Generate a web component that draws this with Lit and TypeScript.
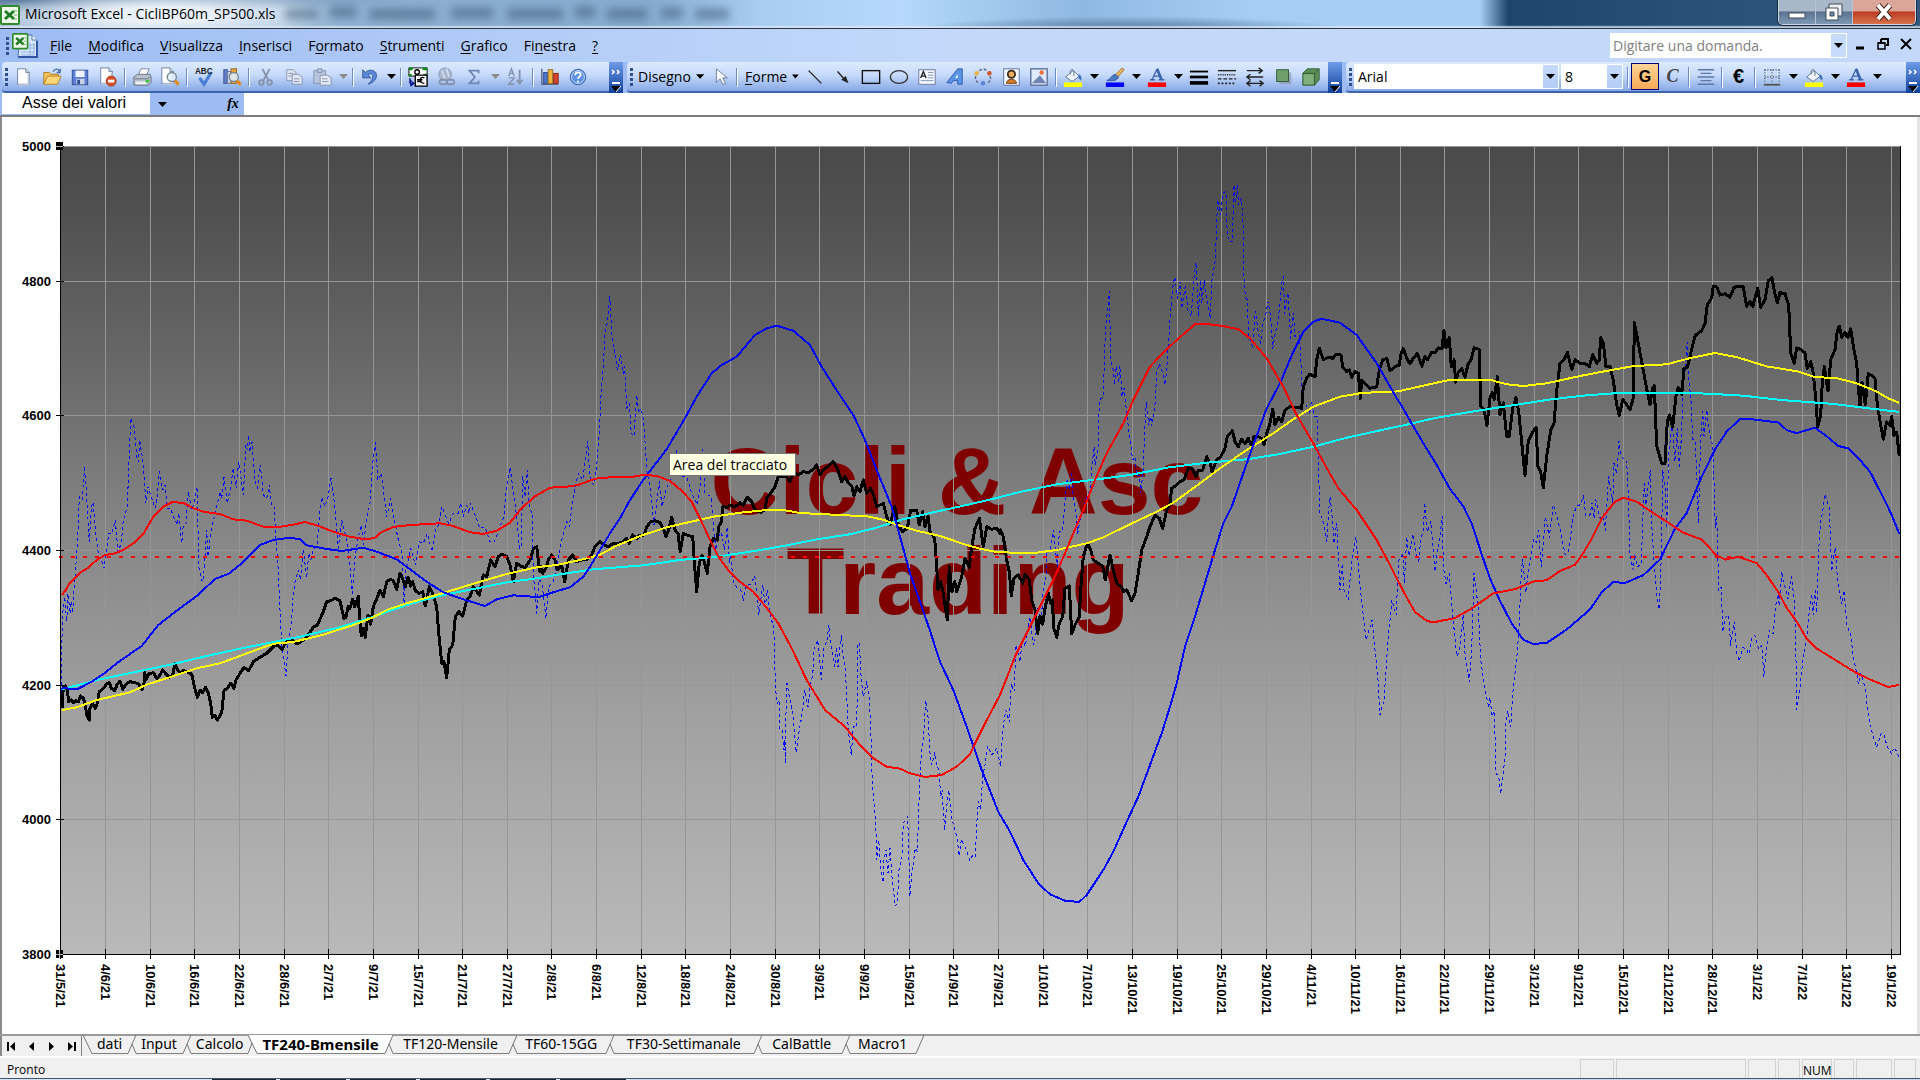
import { LitElement, html, svg, css, nothing, TemplateResult } from "lit";
import { customElement, property } from "lit/decorators.js";
import { classMap } from "lit/directives/class-map.js";

/* ---------- chart data ---------- */

/** A digitised run of points: an origin, the units per pixel, and "x,y" pairs. */
interface Run { x: number; y: number; sx: number; sy: number; p: string }

const run = (x: number, y: number, p: string, sx = 3, sy = sx): Run => ({ x, y, sx, sy, p });
const late = (p: string): Run => run(1400, 260, p, 3, 2.904);

const toPoints = (runs: Run[]): string =>
  runs
    .map((r) =>
      r.p.trim().split(/\s+/).map((pair) => {
        const [px, py] = pair.split(",").map(Number);
        return `${(r.x + px / r.sx).toFixed(1)},${(r.y + py / r.sy).toFixed(1)}`;
      }).join(" "))
    .join(" ");

const PRICE = toPoints([
  run(40, 380, `66,985 70,920 76,918 82,930 86,965 95,960 100,968 108,962 115,965 122,948 130,955 136,975 140,1005 148,1020 150,985 158,970 166,985 172,970 178,935 190,925 200,912 208,908 214,925 224,932 232,912 240,903 248,928 258,912 270,905 285,908 296,912 306,930 312,910 314,878 318,900 326,882 340,878 350,895 358,888 368,870 376,880 388,892 398,885 405,850 412,868 420,878 430,872 440,875 455,882 462,915 472,952 480,930 488,938 496,922 505,940 512,970 517,1012 525,1005 532,1020 545,998 552,932 562,925 572,910 582,925 588,900 600,880 612,862 626,872 640,845 660,832 680,820 700,800 712,795 726,808 740,785 755,780 772,792 790,780 805,765 820,742 832,735 848,700 860,665 872,662 885,655 900,662 906,690 912,715 918,712 924,680 930,685 938,658 944,680 955,648 958,700 964,768 970,745 976,772 984,705 992,732 1000,680 1012,652 1020,630 1030,650 1040,605 1052,598 1060,602 1070,628 1080,580 1090,602 1096,620 1104,592 1112,618 1118,605 1126,632 1138,640 1148,635 1156,678 1168,620 1178,640 1190,680 1196,760 1205,850 1212,845 1220,893 1228,810 1238,795 1246,710 1256,695 1268,708 1280,660 1290,650 1300,620 1318,645 1330,585 1340,590 1352,540 1365,560 1375,530 1385,523 1400,530 1410,555 1420,605 1430,550 1445,560 1456,562 1470,540 1480,508 1490,500 1496,550 1500,575`),
  run(500, 280, `122,860 128,880 138,865 145,840 155,825 165,840 172,870 185,855 194,905 205,840 218,825 230,845 245,840 262,838 275,825 285,800 300,785 312,795 325,800 340,790 355,790 370,785 380,775 388,790 398,765 410,775 420,765 432,765 440,740 452,725 465,722 480,728 490,745 498,770 506,750 515,712 525,750 534,760 541,815 550,760 560,765 578,770 584,860 590,935 598,850 606,825 614,850 622,880 630,800 640,775 652,780 656,740 664,725 668,680 680,682 690,676 705,680 720,668 730,675 742,652 755,665 765,690 782,697 795,690 800,655 812,640 825,620 835,590 860,590 870,605 880,575 895,585 910,575 925,578 940,568 950,555 960,585 970,570 985,558 1000,545 1012,565 1025,605 1035,590 1045,608 1056,620 1062,648 1070,620 1080,635 1090,600 1100,640 1112,625 1122,650 1130,680 1150,670 1160,710 1170,735 1184,680 1195,735 1208,755 1222,745 1232,690 1242,690 1250,690 1258,735 1268,695 1275,740 1284,708 1290,755 1304,775 1310,860 1314,930 1322,905 1330,940 1342,1020 1348,860 1356,935 1364,905 1370,935 1385,890 1395,835 1408,862 1415,800 1425,745 1438,715 1450,800 1460,740 1475,748 1490,745 1500,760`),
  run(740, 500, `782,90 790,110 800,180 808,215 814,288 822,235 835,225 848,250 855,222 868,240 875,300 885,330 893,400 900,350 908,372 916,320 925,280 932,310 938,300 940,380 950,412 958,370 968,350 975,265 988,258 995,402 1005,375 1018,350 1022,270 1030,170 1042,130 1052,150 1060,180 1075,190 1088,198 1096,240 1110,165 1120,210 1130,250 1145,262 1150,275 1160,270 1175,302 1185,280 1195,220 1205,150 1220,110 1230,80 1245,45 1258,55 1268,85 1280,30`),
  run(980, 170, `570,1000 575,955 590,945 600,935 612,930 625,895 636,895 648,920 655,900 668,900 680,860 690,878 696,905 710,870 722,860 735,835 742,800 757,782 765,815 775,830 785,808 795,822 805,805 815,830 822,800 835,800 845,805 852,825 860,790 870,760 878,718 885,765 895,742 905,755 915,720 930,710 945,712 965,715 970,650 980,625 990,612 1005,620 1010,570 1018,535 1030,570 1045,562 1058,565 1070,552 1083,555 1088,590 1100,605 1108,600 1115,622 1125,605 1135,610 1141,685 1145,630 1155,640 1170,655 1190,650 1198,600 1208,570 1220,565 1230,602 1245,590 1258,585`),
  late(`2,275 10,258 20,285 30,302 40,285 52,272 66,308 75,280 82,290 95,268 105,270 115,255 126,258 132,205 138,255 148,225 154,310 162,290 167,355 175,325 185,315 195,340 205,300 213,290 222,255 238,260 242,425 252,435 261,480 270,400 277,385 283,405 292,338 300,450 310,415 320,512 328,512 338,430 348,400 356,440 365,530 375,625 385,525 398,500 408,485 414,600 422,615 430,662 440,570 452,495 462,475 470,380 480,300 492,290 502,268 515,318 525,290 540,300 555,300 568,310 578,275 590,300 598,290 602,225 610,240 618,310 630,308 640,350 650,420 658,452 668,405 680,420 690,435 700,400 703,182 712,225 720,270 730,320 740,375 750,420 757,375 763,365 770,540 785,590 795,592 802,470 808,450 818,485 828,395 835,370 845,390 852,315 862,312 875,260 885,220 905,205 915,185 922,130 935,110 940,75 950,78 960,102 975,98 990,108 1002,80 1015,76 1030,78 1040,135 1050,120 1058,135 1073,82 1082,138 1095,115 1105,60 1116,52 1124,95 1132,125 1140,95 1155,98 1166,130 1172,270 1183,300 1190,255 1205,262 1215,270 1222,315 1232,295 1240,330 1247,400 1253,485 1262,450 1267,355 1273,310 1284,380 1292,290 1305,260 1312,205 1318,192 1325,225 1335,210 1343,225 1352,200 1360,250 1370,300 1375,370 1380,425 1386,355 1396,420 1405,330 1415,335 1425,345 1432,420 1442,480 1450,520 1460,470 1470,480 1475,455 1482,510 1490,500 1498,570`),
]);

const OSCILLATOR = toPoints([
  run(40, 380, `66,950 64,840 68,700 74,650 80,725 84,640 90,700 94,665 98,700 104,600 112,500 118,350 126,360 134,260 140,350 148,485 154,380 160,365 166,450 176,530 184,540 192,565 200,510 206,460 215,462 226,420 234,515 244,490 250,420 262,380 268,220 272,115 282,140 290,230 295,245 299,180 308,240 318,370 324,320 332,345 345,385 352,350 358,275 368,330 376,315 382,385 392,385 400,410 412,435 416,400 425,490 430,435 438,430 445,335 455,390 462,370 472,320 476,560 485,600 490,605 500,450 504,530 514,450 525,400 535,360 540,335 545,355 552,292 562,370 572,320 580,265 588,325 596,245 604,300 610,345 618,195 622,210 626,165 630,215 636,185 644,300 652,325 661,255 670,345 680,355 688,315 694,375 702,380 708,480 714,560 720,690 726,800 738,888 744,790 754,740 758,660 766,600 776,570 782,600 790,510 800,595 806,520 812,540 820,510 832,490 838,410 845,350 855,380 864,350 873,295 882,360 895,505 905,420 920,480 930,560 937,640 944,540 955,470 965,435 970,495 980,420 990,370 998,250 1006,188 1014,300 1024,280 1040,410 1052,355 1065,430 1075,480 1086,520 1092,670 1098,570 1112,505 1126,555 1138,485 1150,490 1162,460 1176,515 1186,450 1196,435 1206,380 1226,430 1240,400 1255,400 1262,370 1270,410 1280,375 1286,400 1292,370 1305,405 1320,445 1335,440 1350,485 1362,488 1380,440 1392,410 1398,340 1410,262 1418,320 1430,410 1438,505 1444,495 1448,290 1456,350 1462,270 1468,380 1476,400 1480,580 1490,700 1496,600`),
  run(500, 280, `120,900 126,910 138,1015 146,920 160,905 172,850 182,790 200,725 208,740 220,650 235,580 248,600 263,485 270,590 280,615 290,560 298,450 304,330 310,260 316,150 322,130 329,48 336,170 345,220 352,270 362,225 370,280 374,260 380,385 388,370 394,460 402,468 410,345 416,400 422,385 428,405 434,470 440,570 450,620 462,735 478,605 486,680 498,630 510,600 530,510 545,590 560,590 575,640 592,675 600,620 607,508 615,640 634,650 640,740 648,810 655,770 664,755 674,810 682,740 688,850 692,830 700,905 712,925 722,930 730,962 738,915 752,912 764,888 770,935 776,1005 782,960 788,915 796,980 802,930 810,1000 820,1040`),
  run(740, 500, `103,420 106,560 112,610 118,600 120,690 126,690 132,750 134,720 137,790 138,640 141,550 148,590 152,610 160,650 168,758 178,690 185,650 194,570 204,620 212,540 218,530 222,450 233,420 244,538 252,440 262,420 266,375 272,430 284,500 290,440 294,500 304,405 310,480 316,500 320,590 325,690 334,765 340,680 350,680 354,430 358,430 364,540 370,590 380,545 388,590 394,740 397,860 403,910 408,1000 410,1080 416,1020 422,1100 429,1148 432,1080 438,1050 444,1120 450,1045 456,1130 466,1218 472,1210 477,1110 486,1070 490,970 503,950 510,1190 516,1120 526,1045 532,1055 538,880 544,760 550,720 557,602 564,650 570,760 575,795 584,758 590,795 597,810 602,890 606,870 614,992 620,920 626,870 636,960 645,990 652,1020 658,1068 664,1018 675,1040 690,1082 698,1065 706,1070 712,940 716,905 722,930 728,830 736,790 743,738 756,765 770,745 782,800 788,690 797,630 808,665 814,550 822,575 828,435 840,485 848,410 856,440 862,400 870,350 880,435 886,400 892,320 903,370 910,270 918,230 920,150 930,155 940,90 952,200 958,95 968,95 975,0`),
  run(980, 170, `262,925 268,960 275,905 280,985 288,1030 293,1090 300,1050 318,990 330,960 335,900 342,830 346,885 354,840 358,690 370,680 376,490 388,365 392,570 400,600 404,645 408,590 416,640 420,588 426,680 432,655 440,730 450,810 458,870 465,860 470,915 478,915 482,968 490,900 494,780 499,695 506,765 512,740 515,768 524,720 530,610 538,580 548,610 556,645 562,570 566,510 572,420 580,340 585,320 592,385 600,335 605,415 616,350 624,420 634,440 642,320 648,278 652,350 655,440 662,330 665,400 673,330 682,400 690,445 696,330 706,270 710,150 714,90 722,135 728,70 738,65 742,200 750,215 757,215 762,45 766,100 772,45 776,105 784,85 790,170 792,320 796,380 802,390 806,500 818,530 826,425 834,480 842,525 848,460 856,440 864,395 872,440 878,535 888,480 895,450 905,340 910,320 914,430 924,370 932,505 940,430 945,500 958,485 964,600 968,700 975,700 990,730 994,695 1005,740 1012,740 1015,880 1020,1030 1028,1050 1040,1115 1046,1020 1051,980 1058,1060 1062,1120 1070,1060 1076,1180 1080,1260 1087,1180`),
  run(0, 0, `1344,590 1348,600 1352,560 1356,537 1361,595 1366,640 1372,620 1378,680 1380,715 1384,700 1388,640 1392,600 1396,615 1399,560`, 1),
  late(`2,870 8,850 13,940 20,805 27,860 40,795 48,850 56,880 62,810 70,790 74,705 82,790 92,760 105,905 112,850 120,800 127,745 130,890 138,940 148,910 156,1010 170,1150 178,1140 190,1030 196,1160 208,1225 215,1130 222,910 235,1010 242,1160 252,1230 260,1270 266,1300 270,1270 276,1325 283,1310 288,1490 296,1500 302,1550 308,1500 316,1440 318,1340 324,1310 332,1355 340,1240 350,1160 358,1060 364,900 368,870 378,965 385,900 392,860 402,810 410,820 416,785 424,890 436,745 448,805 460,710 472,750 482,790 495,855 505,850 512,800 520,740 530,715 542,710 550,685 558,745 570,740 576,705 582,750 587,695 600,750 608,745 616,785 622,690 626,630 638,705 642,590 650,620 657,525 664,570 680,585 685,680 690,860 700,900 704,855 712,890 724,885 728,760 733,650 738,710 751,610 756,780 762,880 770,970 778,1015 784,860 788,610 795,660 800,780 806,560 817,475 825,585 832,490 838,605 845,500 850,320 856,320 862,238 866,340 874,420 878,520 886,525 892,660 895,765 902,520 908,440 912,510 920,435 928,500 938,540 942,640 946,780 950,740 956,960 964,950 968,1080 975,1040 986,1030 992,1120 1002,1050 1010,1140 1018,1165 1028,1125 1040,1130 1046,1145 1055,1100 1064,1090 1076,1130 1085,1120 1092,1210 1100,1120 1108,1075 1120,1085 1126,1010 1134,970 1138,1005 1146,905 1155,950 1164,985 1174,920 1182,980 1187,1100 1190,1305 1200,1240 1210,1150 1222,1080 1228,1020 1235,970 1240,1030 1246,960 1250,1025 1256,840 1262,760 1270,720 1275,680 1288,720 1295,905 1305,835 1312,920 1326,1000 1332,960 1340,1060 1352,1090 1360,1150 1370,1200 1375,1230 1382,1200 1395,1240 1405,1320 1418,1380 1430,1415 1444,1375 1452,1375 1460,1410 1475,1435 1482,1415 1492,1430 1497,1450`),
]);

const RED_CYCLE = toPoints([
  run(40, 380, `66,645 76,632 90,608 105,595 120,578 145,563 170,540 195,525 225,520 250,510 280,490 310,462 340,410 370,380 395,367 430,368 460,385 490,395 540,402 580,418 620,422 670,440 710,442 760,434 795,426 830,436 880,455 930,470 970,477 1002,475 1025,456 1060,441 1110,435 1200,430 1240,438 1290,457 1330,462 1370,452 1410,428 1440,390 1470,362`),
  run(500, 280, `100,652 150,623 200,620 235,615 285,596 340,591 390,592 435,584 470,588 510,603 545,632 575,665 600,715 630,780 655,830 685,870`),
  run(740, 500, `0,245 40,275 85,330 115,370 155,445 200,540 255,630 315,680 360,735 400,775 440,800 480,806 510,820 555,831 605,825 650,800 690,762 730,680 780,585 825,470 870,380 905,310 940,240 975,160 1000,100 1030,30`),
  run(980, 170, `345,930 380,850 430,760 460,690 510,590 550,548 590,510 645,463 680,462 730,468 775,478 810,505 860,565 910,650 950,735 1000,820 1035,885 1075,955 1130,1020 1190,1110 1230,1185`),
  late(`0,943 20,980 45,1022 80,1048 100,1052 165,1040 215,1012 280,968 345,956 400,934 440,930 480,903 525,885 545,858 575,810 605,750 645,702 670,690 710,702 760,735 800,760 850,792 905,812 950,858 975,870 1015,862 1070,880 1100,915 1135,965 1160,1010 1190,1050 1220,1100 1245,1125 1300,1158 1370,1200 1410,1218 1465,1240 1498,1234`),
]);

const BLUE_CYCLE = toPoints([
  run(40, 380, `66,923 90,926 115,926 160,902 190,882 230,850 270,822 305,798 355,735 410,692 470,648 525,597 565,582 610,546 660,495 700,480 750,473 780,478 800,496 860,507 905,513 970,503 1010,515 1070,538 1110,568 1160,605 1210,637 1270,658 1335,678 1370,658 1420,646 1490,651`),
  run(500, 280, `120,950 150,940 210,922 250,890 270,860 300,810 330,760 360,715 390,660 430,600 460,560 500,508 540,440 560,405 590,350 635,280 665,255 710,230 765,165 800,145 830,137 880,152 930,195 965,260 1000,315 1060,405 1095,480 1130,570 1175,680 1200,770 1230,880 1265,980 1290,1052`),
  run(740, 500, `600,485 640,570 680,680 725,810 775,935 810,995 850,1080 895,1150 930,1183 975,1202 1018,1206 1040,1185 1090,1110 1120,1055 1160,965 1195,890 1230,795 1265,700 1290,620 1310,550 1335,440 1365,350 1395,250 1425,150 1450,70 1475,20`),
  run(980, 170, `790,910 820,825 860,715 900,640 940,545 970,485 1000,455 1025,446 1080,458 1130,495 1190,580 1250,685`),
  late(`0,415 35,475 75,540 110,595 150,665 190,715 215,765 245,855 270,925 300,990 335,1055 370,1103 400,1115 440,1112 500,1073 570,1015 605,965 640,935 675,938 730,915 780,870 825,780 860,735 900,640 945,550 980,498 1020,462 1060,463 1135,472 1160,494 1190,503 1245,487 1280,512 1315,540 1345,547 1375,575 1410,615 1450,690 1475,740 1498,795`),
]);

const FAST_AVERAGE = toPoints([
  run(40, 380, `66,990 110,982 170,960 270,937 320,914 400,888 470,865 540,850 600,828 680,798 710,790 760,786 850,764 940,735 1000,712 1040,690 1100,670 1200,642 1300,611 1400,582 1490,562`),
  run(500, 280, `120,860 170,855 250,838 300,824 350,797 420,768 500,742 560,728 640,710 720,698 800,690 850,690 900,699 1000,704 1100,709 1150,719 1200,737 1250,752 1320,768 1400,795 1440,806 1490,816`),
  run(740, 500, `780,157 830,158 890,158 950,150 1040,130 1090,112 1180,68 1250,35 1300,8`),
  run(980, 170, `660,940 720,895 800,840 880,790 940,748 1000,710 1080,680 1150,668 1240,666`),
  late(`0,380 60,367 140,350 200,348 270,348 320,361 370,366 440,358 540,337 620,322 700,308 800,303 870,285 945,270 1010,282 1100,309 1190,323 1245,340 1310,343 1370,358 1430,382 1465,402 1498,415`),
]);

const SLOW_AVERAGE = toPoints([
  run(40, 380, `66,928 180,898 300,873 400,852 500,828 600,806 720,782 780,770 900,742 1000,710 1100,675 1200,647 1300,627 1400,607 1490,595`),
  run(500, 280, `120,893 200,880 280,868 430,856 540,840 650,830 750,815 850,798 950,778 1050,763 1130,743 1200,720 1300,697 1400,675 1490,654`),
  run(980, 170, `110,968 230,943 330,931 450,915 560,893 680,878 800,868 900,852 1000,830 1100,803 1250,770`),
  late(`0,483 100,460 200,443 330,423 450,405 560,393 660,386 800,385 920,388 1030,394 1150,407 1300,418 1400,430 1498,441`),
]);

const DATES = `31/5/21 4/6/21 10/6/21 16/6/21 22/6/21 28/6/21 2/7/21 9/7/21 15/7/21 21/7/21 27/7/21 2/8/21 6/8/21 12/8/21 18/8/21 24/8/21 30/8/21 3/9/21 9/9/21 15/9/21 21/9/21 27/9/21 1/10/21 7/10/21 13/10/21 19/10/21 25/10/21 29/10/21 4/11/21 10/11/21 16/11/21 22/11/21 29/11/21 3/12/21 9/12/21 15/12/21 21/12/21 28/12/21 3/1/22 7/1/22 13/1/22 19/1/22`.split(" ");
const LEVELS = [5000, 4800, 4600, 4400, 4200, 4000, 3800];

const PLOT = { left: 60, right: 1900, top: 146, bottom: 954 };
const dateX = (i: number) => Math.round(60.3 + i * 44.65);
const levelY = (v: number) => Math.round(PLOT.top + ((5000 - v) / 1200) * (PLOT.bottom - PLOT.top));

/* ---------- icons, drawn on a 22 x 22 grid ---------- */

const page = (x = 4, y = 2) => svg`
  <path d="M${x} ${y}h9l4 4v13h-13z" fill="#fff" stroke="#6e7f9e"/>
  <path d="M${x + 9} ${y}v4h4" fill="#cfdcf2" stroke="#6e7f9e"/>
  <path d="M${x + 12} ${y + 5}v13h-11" fill="none" stroke="#b9c6de" stroke-width="2"/>`;
const lens = svg`<circle cx="13" cy="11" r="5" fill="#dff0fb" fill-opacity=".9" stroke="#7b8797" stroke-width="1.5"/><path d="M16.500 15l4 4.500" stroke="#e08a1c" stroke-width="3.500"/>`;
const bucket = svg`<path d="M3 11l8-7 7 6-8 6z" fill="#eef3fa" stroke="#5d6f8c"/><path d="M8 8c-1-6 4-8 4-1v3" fill="none" stroke="#5d6f8c"/><path d="M17 8c3 1 4 3 3 7l-3-3z" fill="#3f72b8"/>`;
const bigA = svg`<path d="M5.500 14L11 2.500" fill="none" stroke="#3c62a8" stroke-width="1.500"/><path d="M11 2l5 12" fill="none" stroke="#3c62a8" stroke-width="3"/><path d="M7.500 10h7M3.500 14h5M13 14h6" fill="none" stroke="#3c62a8" stroke-width="1.500"/>`;
const stripe = (c: string) => svg`<rect x="1" y="17" width="20" height="5" fill="${c}"/>`;

const ICONS: Record<string, TemplateResult> = {
  new: svg`${page()}`,
  open: svg`<path d="M2 19V6h6l2 2h8v4" fill="#f6c65a" stroke="#a8741a"/><path d="M2 19l4-9h15l-4 9z" fill="#fbd678" stroke="#b57d1e"/><path d="M12 5c3-4 6-3 7 0m1-3v4h-4" fill="none" stroke="#4b6ea8" stroke-width="1.500"/>`,
  save: svg`<rect x="2.500" y="3.500" width="17" height="16" fill="#5d80d4" stroke="#2f4c96"/><rect x="6" y="4" width="10" height="7" fill="#eef4ff"/><rect x="7" y="13" width="9" height="6" fill="#c8d2e4"/><rect x="8" y="14" width="3" height="5" fill="#2f4c96"/>`,
  perm: svg`${page(3, 1)}<circle cx="14.500" cy="15.500" r="5.500" fill="#d8512b" stroke="#a03818"/><rect x="11" y="14" width="7" height="3" fill="#fff"/>`,
  print: svg`<path d="M7 9l3-7h9l-3 7z" fill="#fff" stroke="#77859e"/><path d="M2 11l4-3h14l1 3v6l-3 3H2z" fill="#b9c1ce" stroke="#616d80"/><path d="M3 13h14l3-2" fill="none" stroke="#616d80"/><path d="M4 16h12v3H4z" fill="#eef1f5"/><rect x="15" y="14" width="4" height="3" fill="#3cc83c"/>`,
  preview: svg`${page(2, 1)}${lens}`,
  spell: svg`<path d="M6 12l5 7 8-13" fill="none" stroke="#4b7fd6" stroke-width="3.500"/><text x="1" y="8" class="tiny">ABC</text>`,
  research: svg`<rect x="2" y="3" width="4" height="15" fill="#5f7fc8" stroke="#39549a"/><rect x="6" y="5" width="4" height="13" fill="#c8d2e4" stroke="#68779a"/><rect x="10" y="2" width="6" height="16" fill="#e8a33a" stroke="#96641a"/>${lens}`,
  cut: svg`<path d="M7 2l7 13M15 2L8 15" stroke="#8492ae" stroke-width="2"/><circle cx="6" cy="17" r="2.500" fill="none" stroke="#8492ae" stroke-width="2"/><circle cx="15" cy="17" r="2.500" fill="none" stroke="#8492ae" stroke-width="2"/>`,
  copy: svg`<g fill="#dfe6f2" stroke="#8492ae"><path d="M3 3h7l3 3v9H3z"/><path d="M9 8h7l4 3v8H9z"/><path d="M5 7h5M5 10h4M11 13h6M11 16h6"/></g>`,
  paste: svg`<g fill="#b8c5dc" stroke="#8492ae"><path d="M2 4h13v14H2z"/><path d="M6 2h5v4H6z"/><path d="M9 9h8l4 3v8H9z" fill="#e4eaf4"/><path d="M11 13h6M11 16h7"/></g>`,
  undo: svg`<path d="M3 3v9h9l-3-3c3-3 6-1 5 2-.500 3-2 5-5 8 6-2 10-6 9-11C17 3 10 2 6 6z" fill="#5b88d6" stroke="#34589c"/>`,
  euro: svg`<path d="M1 1h20v9H1z" fill="#fff" stroke="#000"/><path d="M1 2h4M16 2h5M1 9h3M17 9h4" stroke="#118a11" stroke-width="3"/><circle cx="10" cy="5.500" r="2.500" fill="none" stroke="#000" stroke-width="1.500"/><path d="M8 9h13v12H8z" fill="#fff" stroke="#000" stroke-width="1.500"/><path d="M18 12c-5-3-7 6 0 6M10 14h6M10 16h5" fill="none" stroke="#000" stroke-width="1.500"/><path d="M2 12v6h3M3 15l4 3-4 3z" fill="#00108a" stroke="#00108a"/>`,
  link: svg`<circle cx="10" cy="8" r="7" fill="#a9b7d0" stroke="#8c9bb8"/><path d="M6 4c3 2 1 6 4 9M12 2c-1 4 3 5 2 9" fill="none" stroke="#d2dcec" stroke-width="2"/><rect x="4" y="14" width="8" height="5" rx="2.500" fill="none" stroke="#8492ae" stroke-width="2"/><rect x="12" y="14" width="8" height="5" rx="2.500" fill="none" stroke="#8492ae" stroke-width="2"/>`,
  sum: svg`<path d="M16 7V4H6l6 7-6 7h10v-3" fill="none" stroke="#6f84b4" stroke-width="2"/>`,
  sort: svg`<path d="M3 10l3-8 3 8M4 7h4M3 12h6l-6 7h6" fill="none" stroke="#8492ae" stroke-width="1.500"/><path d="M15 3v15M12 14l3 4 3-4" fill="none" stroke="#8492ae" stroke-width="2"/>`,
  chart: svg`<path d="M2 2v17h18" fill="none" stroke="#5a6684" stroke-width="1.500"/><rect x="4" y="6" width="4" height="12" fill="#4a78d0" stroke="#2b4a90"/><rect x="9" y="3" width="5" height="15" fill="#f0b43c" stroke="#9a6a14"/><rect x="15" y="7" width="5" height="11" fill="#d8442c" stroke="#8a2412"/>`,
  help: svg`<circle cx="11" cy="11" r="8.500" fill="#5b8fe0" stroke="#3560ac"/><circle cx="11" cy="11" r="7" fill="none" stroke="#d5e4fb"/><path d="M8 9c0-4 6-4 6-.500 0 2-3 2-3 4.500M11 15v2" fill="none" stroke="#fff" stroke-width="2"/>`,
  pointer: svg`<path d="M7 2v15l4-4 3 6 3-1-3-6h5z" fill="#f6f9ff" stroke="#6b7890"/>`,
  line: svg`<path d="M4 4l14 14" stroke="#222" stroke-width="1.500"/>`,
  arrow: svg`<path d="M5 5l8 9" stroke="#222" stroke-width="1.500"/><path d="M17 18l-8-4 5-4z" fill="#222"/>`,
  rect: svg`<rect x="1.500" y="4" width="19" height="14" fill="none" stroke="#111" stroke-width="1.500"/>`,
  oval: svg`<ellipse cx="11" cy="11" rx="9.500" ry="7" fill="none" stroke="#333" stroke-width="1.500"/>`,
  textbox: svg`<rect x="2" y="3" width="18" height="16" fill="#f4f8ff" stroke="#66779a"/><path d="M4 12l3-7 3 7M5 10h4" fill="none" stroke="#222" stroke-width="1.500"/><path d="M12 6h6M12 9h6M12 12h6M4 15h14" stroke="#7f8fb0"/>`,
  wordart: svg`<path d="M2 17L14 2h5v17h-5v-4H9l-2 3z" fill="#5a92e4" stroke="#2c5cae"/><path d="M11 12l3-4v4z" fill="#e8f1ff"/>`,
  diagram: svg`<g fill="none" stroke="#55627c" stroke-width="1.500" stroke-dasharray="3 2"><path d="M7 4c3-2 6-2 8 0M3 10c-1 4 1 7 4 8M19 10c1 4-1 7-4 8"/></g><circle cx="4" cy="7" r="2.500" fill="#e8b24a"/><circle cx="18" cy="7" r="2.500" fill="#d0562c"/><circle cx="11" cy="18" r="2.500" fill="#5e86d8"/>`,
  clip: svg`<rect x="3" y="2" width="17" height="18" fill="#f4f8ff" stroke="#5c6f96"/><circle cx="11.500" cy="8" r="4" fill="#f0b060" stroke="#3a2c1c" stroke-width="2"/><path d="M6 18c0-6 11-6 11 0z" fill="#d87a2a" stroke="#6a3c12"/>`,
  picture: svg`<rect x="2" y="2" width="18" height="18" fill="#dfeafc" stroke="#5c6f96" stroke-width="1.500"/><path d="M3 18l9-9 7 9z" fill="#6f86b4"/><circle cx="14" cy="6" r="2.500" fill="#e8763a"/>`,
  fill: svg`${bucket}${stripe("#ffff00")}`,
  brush: svg`<path d="M19 1l2 2-7 8-3-2z" fill="#f0b860" stroke="#9a6c20"/><path d="M11 8l4 3c-2 5-8 4-13 4 4-1 5-6 9-7z" fill="#4a7ac4" stroke="#2f5596"/>${stripe("#0000ff")}`,
  font: svg`${bigA}${stripe("#ff0000")}`,
  weight: svg`<path d="M1 5h20" stroke="#000" stroke-width="2"/><path d="M1 11h20" stroke="#000" stroke-width="3"/><path d="M1 17.500h20" stroke="#000" stroke-width="4"/>`,
  dash: svg`<g stroke="#222" stroke-width="1.500"><path d="M1 4h20"/><path d="M1 8.500h20" stroke-dasharray="1 1"/><path d="M1 13h20" stroke-dasharray="4 2"/><path d="M1 18h20" stroke-width="2" stroke-dasharray="2 2"/></g>`,
  arrows: svg`<g fill="none" stroke="#222" stroke-width="1.500"><path d="M2 4h17M15 1l4 3-4 3"/><path d="M2 11h18M6 8l-4 3 4 3"/><path d="M2 18h18M6 15l-4 3 4 3M16 15l4 3-4 3"/></g>`,
  shadow: svg`<rect x="7" y="6" width="13" height="13" fill="#8a98a8" opacity=".7"/><rect x="4" y="3" width="13" height="13" fill="#6fa06c" stroke="#2f5a34"/>`,
  cube: svg`<path d="M2 7l5-5h13v12l-5 6H2z" fill="#5b8f58" stroke="#2f5a34"/><path d="M2 7h13v13M15 7l5-5" fill="none" stroke="#2f5a34"/><path d="M3 8h11v11H3z" fill="#7fb07a"/>`,
  center: svg`<path d="M2 3h18M5 7h12M2 11h18M5 15h12M2 19h18" stroke="#5f76a8" stroke-width="1.500"/>`,
  border: svg`<path d="M3 3h16M3 11h16M3 3v15M11 3v15M19 3v15" stroke="#444" stroke-width="1.500" stroke-dasharray="1 2"/><path d="M2 19.500h18" stroke="#555" stroke-width="2"/>`,
};

/* ---------- toolbars ---------- */

type Tool = string | { icon: string; name: string };
const t = (icon: string, name: string): Tool => ({ icon, name });

const STANDARD: Tool[] = [
  t("new", "Nuovo"), t("open", "Apri"), t("save", "Salva"), t("perm", "Autorizzazione"), "|",
  t("print", "Stampa"), t("preview", "Anteprima di stampa"), "|",
  t("spell", "Controllo ortografia"), t("research", "Ricerche"), "|",
  t("cut", "Taglia"), t("copy", "Copia"), t("paste", "Incolla"), "v-", "|",
  t("undo", "Annulla"), "v", "|",
  t("euro", "Conversione in euro"), t("link", "Collegamento ipertestuale"), t("sum", "Somma automatica"), "v-", t("sort", "Ordinamento crescente"), "|",
  t("chart", "Creazione guidata Grafico"), t("help", "Guida"),
];
const SELECT_TOOLS: Tool[] = [t("pointer", "Seleziona oggetti"), "|"];
const DRAWING: Tool[] = [
  t("line", "Linea"), t("arrow", "Freccia"), t("rect", "Rettangolo"), t("oval", "Ovale"), t("textbox", "Casella di testo"),
  t("wordart", "WordArt"), t("diagram", "Diagramma"), t("clip", "ClipArt"), t("picture", "Immagine"), "|",
  t("fill", "Colore riempimento"), "v", t("brush", "Colore linea"), "v", t("font", "Colore carattere"), "v",
  t("weight", "Stile linea"), t("dash", "Stile tratteggio"), t("arrows", "Stile freccia"), t("shadow", "Ombreggiatura"), t("cube", "3D"),
];
const FORMAT_END: Tool[] = [
  t("border", "Bordi"), "v", t("fill", "Colore riempimento"), "v", t("font", "Colore carattere"), "v",
];

const MENUS: [string, string, string][] = [
  ["", "F", "ile"], ["", "M", "odifica"], ["", "V", "isualizza"], ["", "I", "nserisci"], ["F", "o", "rmato"],
  ["", "S", "trumenti"], ["", "G", "rafico"], ["Fi", "n", "estra"], ["", "?", ""],
];

const SHEETS = ["dati", "Input", "Calcolo", "TF240-Bmensile", "TF120-Mensile", "TF60-15GG", "TF30-Settimanale", "CalBattle", "Macro1"];
const ACTIVE = 3;

/* ---------- chart element ---------- */

@customElement("cycle-chart")
export class CycleChart extends LitElement {
  static styles = css`
    :host { display: block; min-height: 0; }
    svg { display: block; width: 100%; height: 100%; }
    .crisp { shape-rendering: crispEdges; }
    .grid { stroke: #969696; stroke-width: 1; }
    .axis { stroke: #000; stroke-width: 1; fill: none; }
    .tick { stroke: #000; stroke-width: 1; }
    .label { font: bold 13px "Liberation Sans", Arial, sans-serif; fill: #000; }
    .mark { font: bold 95px "Liberation Sans", Arial, sans-serif; fill: #800000; text-anchor: middle; }
    .series { fill: none; stroke-width: 2; stroke-linejoin: round; }
    .price { stroke: #000; stroke-width: 3; }
    .osc { stroke: #0000ff; stroke-width: 1; stroke-dasharray: 3 3; }
    .red { stroke: #ff0000; }
    .blue { stroke: #0000ff; }
    .yellow { stroke: #ffff00; }
    .cyan { stroke: #00ffff; }
    .zero { stroke: #ff0000; stroke-width: 2; stroke-dasharray: 4 8; }
    .tip { fill: #ffffe1; stroke: #767676; }
    .tiptext { font: 14px "Open Sans", "Noto Sans", sans-serif; fill: #000; }
  `;

  render() {
    return html`
      <svg viewBox="0 117 1920 917" role="img" aria-label="Cicli e prezzo S&P 500">
        <defs>
          <linearGradient id="wall" x1="0" y1="0" x2="0" y2="1">
            <stop offset="0" stop-color="#4a4a4a" /><stop offset=".08" stop-color="#505050" />
            <stop offset=".3" stop-color="#6c6c6c" /><stop offset=".5" stop-color="#898989" />
            <stop offset=".7" stop-color="#a0a0a0" /><stop offset="1" stop-color="#b9b9b9" />
          </linearGradient>
        </defs>
        <rect x=${PLOT.left} y=${PLOT.top} width=${PLOT.right - PLOT.left} height=${PLOT.bottom - PLOT.top} fill="url(#wall)" />
        <text class="mark" x="957" y="514">Cicli &amp; Asc</text>
        <text class="mark" x="958" y="614">Trading</text>
        <g class="crisp">
          ${DATES.map((_, i) => svg`<line class="grid" x1=${dateX(i)} x2=${dateX(i)} y1=${PLOT.top} y2=${PLOT.bottom} />`)}
          ${LEVELS.map((v) => svg`<line class="grid" x1=${PLOT.left} x2=${PLOT.right} y1=${levelY(v)} y2=${levelY(v)} />`)}
          <polyline class="series osc" points=${OSCILLATOR} />
          <polyline class="series price" points=${PRICE} />
          <polyline class="series cyan" points=${SLOW_AVERAGE} />
          <polyline class="series yellow" points=${FAST_AVERAGE} />
          <polyline class="series blue" points=${BLUE_CYCLE} />
          <line class="zero" x1="59" x2="1900" y1="557" y2="557" />
          <polyline class="series red" points=${RED_CYCLE} />
          <path class="axis" d="M60 146V954H1900V146" />
          ${DATES.map((_, i) => svg`<line class="tick" x1=${dateX(i)} x2=${dateX(i)} y1="949" y2="959" />`)}
          ${LEVELS.map((v) => svg`<line class="tick" x1="56" x2="64" y1=${levelY(v)} y2=${levelY(v)} />`)}
          <path d="M56 142h7v8h-7zM56 950h7v8h-7z" fill="#000" />
          <path d="M56 146h7M59 950v8M56 954h7" stroke="#bbb" />
        </g>
        ${LEVELS.map((v) => svg`<text class="label" text-anchor="end" x="51" y=${levelY(v) + 5}>${v}</text>`)}
        ${DATES.map((d, i) => svg`<text class="label" transform="translate(${dateX(i) - 4} 964) rotate(90)">${d}</text>`)}
        <rect class="tip crisp" x="669" y="453" width="126" height="22" />
        <text class="tiptext" x="673" y="470">Area del tracciato</text>
      </svg>
    `;
  }
}

/* ---------- toolbar element ---------- */

@customElement("tool-strip")
export class ToolStrip extends LitElement {
  @property({ attribute: false }) tools: Tool[] = [];

  static styles = css`
    :host { display: flex; align-items: center; }
    button { padding: 0; border: 0; background: none; display: flex; align-items: center; justify-content: center; height: 28px; }
    .tool { width: 28px; }
    .tool svg { width: 20px; height: 20px; }
    .drop { width: 14px; }
    .drop svg { width: 9px; height: 5px; }
    .sep { width: 1px; height: 18px; margin: 0 3px 0 2px; background: #6a8ccb; box-shadow: 1px 1px 0 #fff; }
    .tiny { font: bold 9px "Liberation Sans", sans-serif; fill: #222; }
  `;

  render() {
    return this.tools.map((tool) => {
      if (tool === "|") return html`<span class="sep"></span>`;
      if (typeof tool === "string") {
        return html`<button class="drop" aria-label="Altre opzioni">
          <svg viewBox="0 0 9 5"><path d="M0 0h9L4.500 5z" fill=${tool === "v" ? "#000" : "#8c8c8c"} /></svg>
        </button>`;
      }
      return html`<button class="tool" aria-label=${tool.name}>
        <svg viewBox="0 0 22 22">${ICONS[tool.icon]}</svg>
      </button>`;
    });
  }
}

/* ---------- application ---------- */

@customElement("app-root")
export class AppRoot extends LitElement {
  static styles = css`
    :host {
      display: flex; flex-direction: column; height: 100vh; overflow: hidden; background: #fff; color: #000;
      font: 14px/20px "Open Sans", "Noto Sans", sans-serif;
    }
    * { box-sizing: border-box; }
    button { padding: 0; margin: 0; border: 0; background: none; font: inherit; color: inherit; }

    .title {
      height: 29px; flex: none; display: flex; align-items: flex-start; padding-right: 4px;
      border-bottom: 1px solid #2c3440; position: relative; overflow: hidden;
      background:
        linear-gradient(180deg, transparent 90%, #dce8f4cc 96%),
        radial-gradient(ellipse 170px 26px at 160px 15px, #e9f0f8 30%, transparent 100%),
        radial-gradient(ellipse 220px 14px at 1130px 30px, #4f7096 0, transparent 100%),
        radial-gradient(ellipse 420px 12px at 0 0, #5b7b9f 0, transparent 100%),
        linear-gradient(90deg, #a9bfd8 0, #b3cbe4 280px, #8fb1d2 340px, #86abcf 650px, #a9cdf2 760px, #b5d8fc 900px, #8fb8e0 1080px, #a6cdf4 1250px, #a8cdf5 1480px, #1f456c 1508px, #2a5078 1700px, #31577e 100%);
    }
    .haze { position: absolute; left: 285px; top: 4px; width: 460px; height: 20px; filter: blur(4px); opacity: .5; }
    .appicon { width: 20px; height: 20px; margin: 5px 5px 0 0; }
    .caption { flex: 1; margin-top: 4px; position: relative; }
    .winbtns { display: flex; position: relative; height: 25px; border: 1px solid #c9d6e4; border-top: 0; border-radius: 0 0 5px 5px; overflow: hidden; box-shadow: 0 0 0 1px #1b2c40; }
    .winbtns button { width: 37px; display: flex; justify-content: center; align-items: center; border-right: 1px solid #b4c4d6; background: linear-gradient(#a9b8c9 0 45%, #5b7390 50%, #7e98b4); }
    .winbtns .close { width: 62px; border: 0; background: linear-gradient(#dba597 0 45%, #bd3d25 50%, #d8734a); }
    .winbtns svg { width: 22px; height: 20px; }

    .menubar { height: 33px; flex: none; display: flex; align-items: center; padding: 0 4px 0 6px; background: linear-gradient(90deg, #9dbcf4, #c4d9fa 50%); }
    .grip { width: 3px; height: 18px; background: repeating-linear-gradient(#2f4f8f 0 3px, transparent 3px 5px); }
    .menubar .book { width: 26px; height: 26px; margin: 0 12px 0 3px; }
    .menus { display: flex; gap: 16px; flex: 1; }
    .menus button { height: 24px; line-height: 24px; }
    u { text-underline-offset: 2px; }
    .ask { display: flex; width: 237px; height: 25px; background: #fff; border: 1px solid #fff; }
    .ask input { flex: 1; min-width: 0; border: 0; padding: 0 2px; font: inherit; background: none; outline: 0; }
    .ask input::placeholder { color: #808080; opacity: 1; }
    .ask button { width: 15px; background: #c6dafa; display: flex; align-items: center; justify-content: center; }
    .mdi { width: 20px; height: 20px; margin-left: 3px; }
    .mdi svg { width: 14px; height: 14px; }

    .bars { height: 31px; flex: none; display: flex; gap: 4px; padding-left: 2px; background: #9dbcf4; }
    .bar { display: flex; align-items: center; border-radius: 4px 0 0 4px; background: linear-gradient(#dceafd, #c6dafa 45%, #86a9e6); border-bottom: 2px solid #3c65ae; }
    .bar .grip { margin: 0 2px 0 3px; }
    .grow { flex: 1; min-width: 0; }
    .end { width: 14px; align-self: stretch; margin: 0 0 -2px auto; background: linear-gradient(#6f9be8, #10409c); display: flex; align-items: flex-end; justify-content: center; }
    .end svg { width: 12px; height: 28px; }
    .standard { width: 621px; }
    .drawing { width: 715px; }
    .word { display: flex; align-items: center; gap: 5px; height: 28px; padding: 0 2px 0 3px; white-space: nowrap; }
    .word svg, .caret { width: 9px; height: 5px; }
    .word.first { width: 71px; }
    .word.forms { width: 61px; padding-left: 5px; }
    .combo { position: relative; display: flex; height: 25px; margin-right: 2px; background: #fff; }
    .combo select { appearance: none; flex: 1; width: 100%; border: 1px solid #fff; padding: 0 3px; font: inherit; background: linear-gradient(#c6dafa, #b4cdf6) right / 15px 100% no-repeat #fff; border-radius: 0; color: #000; }
    .combo .caret { position: absolute; right: 4px; top: 10px; pointer-events: none; }
    .family { width: 205px; }
    .size { width: 62px; }
    .sep { width: 1px; height: 20px; margin: 0 3px 0 2px; background: #6a8ccb; box-shadow: 1px 1px 0 #fff; }
    .face { width: 27px; height: 27px; font: bold 16px "Liberation Sans", Arial, sans-serif; }
    .face.on { width: 28px; background: linear-gradient(#fdd598, #f8ab55); border: 1px solid #00007a; }
    .face.it { font-family: "Liberation Serif", serif; font-style: italic; font-size: 18px; color: #444; }
    .face.euro { font-size: 20px; }
    .face svg { width: 20px; height: 20px; display: block; margin: auto; }

    .formula { height: 24px; flex: none; display: flex; padding-left: 2px; background: #9dbcf4; border-bottom: 2px solid #7c7c7c; }
    .formula .name { width: 148px; height: 21px; border: 0; padding: 0 0 2px 20px; font: 16px/20px "Liberation Sans", Arial, sans-serif; }
    .formula .namedrop { width: 24px; display: flex; align-items: center; justify-content: center; }
    .formula .fx { width: 42px; margin-left: 28px; padding-left: 20px; text-align: center; font: italic bold 14px/22px "Liberation Serif", serif; }
    .formula .cell { flex: 1; border: 0; padding: 0 4px; min-width: 0; font: inherit; outline: 0; }

    .window { flex: 1; min-height: 0; display: flex; flex-direction: column; }
    cycle-chart { flex: 1; box-shadow: inset 2px 0 0 #8a8a8a, inset -3px 0 0 #e4e4e4; }

    .tabs { flex: none; height: 22px; display: flex; align-items: stretch; background: #f0f0f0; border-top: 2px solid #9a9a9a; }
    .nav { display: flex; width: 82px; border-right: 1px solid #808080; border-left: 2px solid #8a8a8a; }
    .nav button { flex: 1; display: flex; align-items: center; justify-content: center; }
    .nav svg { width: 9px; height: 9px; }
    .tab { display: grid; padding: 0 4px; border-bottom: 1px solid #808080; line-height: 18px; font-family: "Noto Sans", sans-serif; text-align: center; height: 19px; margin-top: -1px; white-space: nowrap; }
    .tab span, .tab::after { grid-area: 1 / 1; }
    .tab.wide::after { content: attr(data-name); font-size: 15px; font-weight: 700; visibility: hidden; }
    .tab.on { background: #fff; font-weight: 700; font-size: 15px; }
    .edge { width: 11px; height: 19px; flex: none; margin-top: -1px; }

    .status { flex: none; height: 22px; display: flex; background: #f0f0f0; border-top: 2px solid #fff; padding: 1px 4px 0 7px; font-size: 12px; line-height: 22px; }
    .status .msg { flex: 1; }
    .cells { display: flex; gap: 2px; }
    .cells span { border: 1px solid #d2d2d2; border-bottom: 0; text-align: center; }
    .w20 { width: 20px; } .w22 { width: 22px; } .w28 { width: 28px; } .w30 { width: 30px; } .w34 { width: 34px; } .w36 { width: 36px; } .w130 { width: 130px; }
    .task { flex: none; height: 2px; border-top: 1px solid #40566e; background: linear-gradient(90deg, #d5e4f5 212px, transparent 212px 630px, #c6d9ee 630px), repeating-linear-gradient(90deg, #20242c 0 66px, #dfe8f2 66px 70px); }
  `;

  private caret() {
    return html`<svg class="caret" viewBox="0 0 9 5"><path d="M0 0h9L4.500 5z" fill="#000" /></svg>`;
  }

  private end(more: boolean) {
    return html`<button class="end" aria-label="Opzioni barra degli strumenti">
      <svg viewBox="0 0 12 28">
        ${more ? svg`<path d="M2 5l2 2-2 2M7 5l2 2-2 2" fill="none" stroke="#fff" stroke-width="1.500"/>` : nothing}
        <path d="M2 18h8" stroke="#fff" stroke-width="2" /><path d="M1 21h10l-5 6z" fill="#000" /><path d="M11 21l-5 6" stroke="#fff" />
      </svg>
    </button>`;
  }

  private edge(i: number) {
    const afterActive = i === ACTIVE + 1;
    if (i === 0 || i === ACTIVE) {
      return html`<svg class="edge" viewBox="0 0 11 19">
        ${i === ACTIVE ? svg`<path d="M1 0L11 18.500V0z" fill="#fff"/>` : nothing}
        <path d="M1 0L10 18.500H11${i ? "M5 8L1 18.500H0" : ""}" fill="none" stroke="#777" />
      </svg>`;
    }
    return html`<svg class="edge" viewBox="0 0 11 19">
      ${afterActive ? svg`<path d="M10 0L2 18.500H0V0z" fill="#fff"/>` : nothing}
      <path d="M10 0L2 18.500H0${i < SHEETS.length ? "M6 9L10 18.500H11" : ""}" fill="none" stroke="#777" />
    </svg>`;
  }

  private excelMark() {
    return svg`<rect x="1" y="1" width="18" height="18" rx="1" fill="#eef7ea" stroke="#2f8a2c" stroke-width="2"/><path d="M5 6l9 8M14 6L5 14" stroke="#1f7a24" stroke-width="3"/><path d="M13 6h4M14 10h3M13 14h4" stroke="#6fb064"/>`;
  }

  render() {
    return html`
      <header class="title">
        <svg class="haze" viewBox="0 0 460 20" preserveAspectRatio="none">
          <path d="M0 10h34M44 8h28M84 10h66M166 9h42M222 10h56M290 8h20M322 10h40M376 9h22M410 10h34" stroke="#35536f" stroke-width="11" fill="none" />
        </svg>
        <svg class="appicon" viewBox="0 0 20 20">${this.excelMark()}</svg>
        <span class="caption">Microsoft Excel - CicliBP60m_SP500.xls</span>
        <div class="winbtns">
          <button aria-label="Riduci a icona"><svg viewBox="0 0 22 20"><rect x="3" y="11" width="16" height="5" fill="#fff" stroke="#3d4d60" /></svg></button>
          <button aria-label="Ripristina"><svg viewBox="0 0 22 20"><path d="M6 2h13v12H6z" fill="#eee" stroke="#3d4d60" /><path d="M3 6h12v12H3z" fill="#fff" stroke="#3d4d60" /><path d="M7 10h4v4H7z" fill="#6f88a4" stroke="#3d4d60" /></svg></button>
          <button class="close" aria-label="Chiudi"><svg viewBox="0 0 22 20"><path d="M5 3l12 14M17 3L5 17" stroke="#4c2a26" stroke-width="6" /><path d="M5 3l12 14M17 3L5 17" stroke="#fff" stroke-width="4" /></svg></button>
        </div>
      </header>

      <nav class="menubar">
        <span class="grip"></span>
        <svg class="book" viewBox="0 0 26 26">
          <path d="M8 2h12l5 5v17H6z" fill="#d9e7fb" stroke="#4d75b8" /><path d="M20 2v5h5" fill="#fff" stroke="#4d75b8" />
          <path d="M9 19h13M9 22h13M18 10v12M22 10v12M17 12h6M17 15h6" stroke="#8fb0e2" /><path d="M25 8v16H6" fill="none" stroke="#2f56a0" stroke-width="2" />
          <g transform="scale(.82)">${this.excelMark()}</g>
        </svg>
        <div class="menus">${MENUS.map(([a, u, b]) => html`<button>${a}<u>${u}</u>${b}</button>`)}</div>
        <div class="ask"><input aria-label="Digitare una domanda" placeholder="Digitare una domanda." /><button aria-label="Domande recenti">${this.caret()}</button></div>
        <button class="mdi" aria-label="Riduci finestra"><svg viewBox="0 0 14 14"><path d="M3 11h8" stroke="#000" stroke-width="3" /></svg></button>
        <button class="mdi" aria-label="Ripristina finestra"><svg viewBox="0 0 14 14"><path d="M5 2h8M5 2v3M12 2v6h-2" fill="none" stroke="#000" stroke-width="2" /><path d="M2 6h7v6H2z" fill="none" stroke="#000" stroke-width="1.500" /><path d="M2 6h7" stroke="#000" stroke-width="2" /></svg></button>
        <button class="mdi" aria-label="Chiudi finestra"><svg viewBox="0 0 14 14"><path d="M2 2l10 10M12 2L2 12" stroke="#000" stroke-width="2" /></svg></button>
      </nav>

      <div class="bars">
        <div class="bar standard">
          <span class="grip"></span><tool-strip .tools=${STANDARD}></tool-strip>${this.end(true)}
        </div>
        <div class="bar drawing">
          <span class="grip"></span>
          <button class="word first"><span>Dise<u>g</u>no</span>${this.caret()}</button>
          <tool-strip .tools=${SELECT_TOOLS}></tool-strip>
          <button class="word forms"><span><u>F</u>orme</span>${this.caret()}</button>
          <tool-strip .tools=${DRAWING}></tool-strip>${this.end(false)}
        </div>
        <div class="bar grow">
          <span class="grip"></span>
          <label class="combo family"><select aria-label="Tipo di carattere"><option>Arial</option></select>${this.caret()}</label>
          <label class="combo size"><select aria-label="Dimensione carattere"><option>8</option></select>${this.caret()}</label>
          <span class="sep"></span>
          <button class="face on" aria-label="Grassetto" aria-pressed="true">G</button>
          <button class="face it" aria-label="Corsivo">C</button>
          <span class="sep"></span>
          <button class="face" aria-label="Allinea al centro"><svg viewBox="0 0 22 22">${ICONS.center}</svg></button>
          <span class="sep"></span>
          <button class="face euro" aria-label="Euro">€</button>
          <span class="sep"></span>
          <tool-strip .tools=${FORMAT_END}></tool-strip>${this.end(true)}
        </div>
      </div>

      <div class="formula">
        <input class="name" aria-label="Casella Nome" value="Asse dei valori" />
        <button class="namedrop" aria-label="Elenco nomi">${this.caret()}</button>
        <button class="fx" aria-label="Inserisci funzione">fx</button>
        <input class="cell" aria-label="Barra della formula" />
      </div>

      <main class="window">
        <cycle-chart></cycle-chart>
        <div class="tabs">
          <div class="nav">
            <button aria-label="Primo foglio"><svg viewBox="0 0 9 9"><path d="M1 0v9" stroke="#000" stroke-width="2" /><path d="M8 0v9L3 4.500z" /></svg></button>
            <button aria-label="Foglio precedente"><svg viewBox="0 0 9 9"><path d="M7 0v9L2 4.500z" /></svg></button>
            <button aria-label="Foglio successivo"><svg viewBox="0 0 9 9"><path d="M2 0v9l5-4.500z" /></svg></button>
            <button aria-label="Ultimo foglio"><svg viewBox="0 0 9 9"><path d="M1 0v9l5-4.500z" /><path d="M8 0v9" stroke="#000" stroke-width="2" /></svg></button>
          </div>
          ${SHEETS.map((s, i) => html`${this.edge(i)}<button class=${classMap({ tab: true, on: i === ACTIVE, wide: i > ACTIVE })} data-name=${s}><span>${s}</span></button>`)}
          ${this.edge(SHEETS.length)}
        </div>
      </main>

      <footer class="status">
        <span class="msg">Pronto</span>
        <div class="cells">
          <span class="w34"></span><span class="w130"></span><span class="w28"></span><span class="w22"></span>
          <span class="w30">NUM</span><span class="w20"></span><span class="w36"></span><span class="w22"></span>
        </div>
      </footer>
      <div class="task"></div>
    `;
  }
}
